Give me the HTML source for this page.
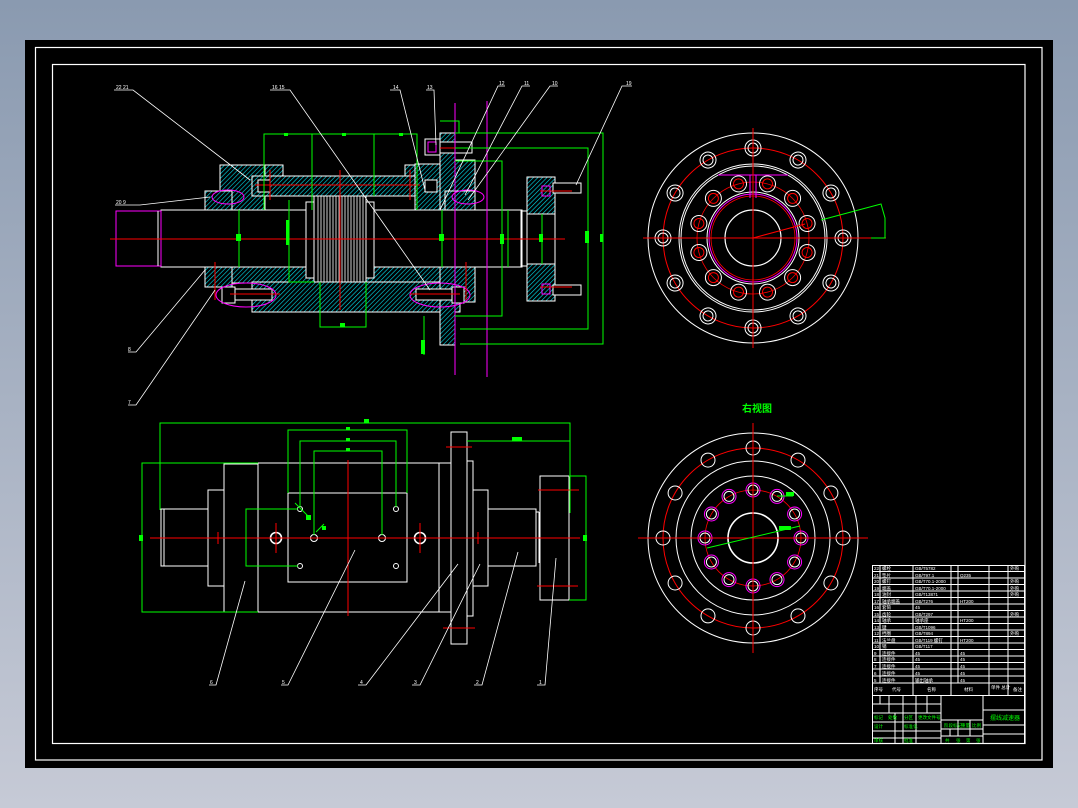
<!DOCTYPE html>
<html><head><meta charset="utf-8"><style>
html,body{margin:0;padding:0}
body{width:1078px;height:808px;overflow:hidden;background:linear-gradient(#8a9ab0,#c6cad6);font-family:"Liberation Sans","Noto Sans CJK SC",sans-serif}
svg{position:absolute;left:0;top:0}
</style></head><body>
<svg width="1078" height="808" viewBox="0 0 1078 808">
<defs>
<pattern id="h" width="3.2" height="3.2" patternUnits="userSpaceOnUse" patternTransform="rotate(45)">
<rect width="3.2" height="3.2" fill="#000"/><line x1="0" y1="0" x2="0" y2="3.2" stroke="#00e0f0" stroke-width="1.2"/></pattern>
</defs>
<rect x="25" y="40" width="1028" height="728" fill="#000"/>
<rect x="35.5" y="47.5" width="1006.5" height="712.5" fill="none" stroke="#fff" stroke-width="1.2"/>
<rect x="52.5" y="64.5" width="972.5" height="679" fill="none" stroke="#fff" stroke-width="1.2"/>

<g id="top">
<g fill="url(#h)" stroke="#fff" stroke-width="1">
<rect x="220" y="165" width="45" height="45"/>
<rect x="252" y="176" width="176" height="20"/>
<rect x="265" y="165" width="18" height="11"/>
<rect x="405" y="165" width="20" height="11"/>
<rect x="415" y="164" width="30" height="46"/>
<rect x="440" y="133" width="15" height="77"/>
<rect x="455" y="160" width="20" height="50"/>
<rect x="205" y="191" width="27" height="19"/>
<rect x="445" y="191" width="30" height="19"/>
<rect x="220" y="267" width="240" height="16"/>
<rect x="252" y="282" width="208" height="30"/>
<rect x="440" y="267" width="15" height="78"/>
<rect x="455" y="267" width="20" height="35"/>
<rect x="205" y="267" width="27" height="20"/>
<rect x="527" y="177" width="28" height="37"/>
<rect x="527" y="264" width="28" height="37"/>
</g>
<rect x="161" y="210" width="361" height="57" fill="#000" stroke="#fff" stroke-width="1"/>
<rect x="116" y="211" width="45" height="55" fill="none" stroke="#f0f" stroke-width="1"/>
<line x1="158" y1="211" x2="158" y2="266" stroke="#fff"/>
<rect x="521" y="211" width="6" height="55" fill="none" stroke="#fff"/>
<rect x="527" y="214" width="28" height="50" fill="#000" stroke="#fff"/>
<rect x="306" y="202" width="68" height="76" fill="#000" stroke="#fff"/>
<rect x="314" y="196" width="52" height="86" fill="#000" stroke="#fff"/>
<g stroke="#fff" stroke-width="0.8">
<line x1="318" y1="196" x2="318" y2="282"/><line x1="321" y1="196" x2="321" y2="282"/><line x1="324" y1="196" x2="324" y2="282"/><line x1="327" y1="196" x2="327" y2="282"/><line x1="330" y1="196" x2="330" y2="282"/><line x1="333" y1="196" x2="333" y2="282"/><line x1="336" y1="196" x2="336" y2="282"/><line x1="339" y1="196" x2="339" y2="282"/><line x1="342" y1="196" x2="342" y2="282"/><line x1="345" y1="196" x2="345" y2="282"/><line x1="348" y1="196" x2="348" y2="282"/><line x1="351" y1="196" x2="351" y2="282"/><line x1="354" y1="196" x2="354" y2="282"/><line x1="357" y1="196" x2="357" y2="282"/><line x1="360" y1="196" x2="360" y2="282"/><line x1="363" y1="196" x2="363" y2="282"/>
</g>
<g fill="#000" stroke="#fff" stroke-width="1">
<rect x="440" y="142" width="32" height="11"/><rect x="425" y="139" width="15" height="16"/>
<rect x="235" y="289" width="37" height="11"/><rect x="222" y="287" width="13" height="16"/>
<rect x="416" y="289" width="36" height="11"/><rect x="452" y="287" width="12" height="16"/>
<rect x="553" y="183" width="28" height="10"/><rect x="553" y="285" width="28" height="10"/>
<rect x="258" y="180" width="12" height="12"/><rect x="425" y="180" width="12" height="12"/>
</g>
<g fill="none" stroke="#f0f" stroke-width="1">
<ellipse cx="228" cy="197" rx="16" ry="7"/><ellipse cx="468" cy="197" rx="16" ry="7"/>
<ellipse cx="246" cy="295" rx="30" ry="12"/><ellipse cx="440" cy="295" rx="30" ry="12"/>
<rect x="542" y="186" width="8" height="10"/><rect x="542" y="284" width="8" height="10"/>
<rect x="428" y="142" width="8" height="10"/>
<line x1="455" y1="103" x2="455" y2="375"/><line x1="487" y1="101" x2="487" y2="377"/>
<line x1="487" y1="161" x2="502" y2="161"/><line x1="487" y1="316" x2="502" y2="316"/>
</g>
<g stroke="#f00" stroke-width="1">
<line x1="110" y1="239" x2="565" y2="239"/>
<line x1="340" y1="170" x2="340" y2="310"/>
<line x1="270" y1="170" x2="270" y2="200"/><line x1="410" y1="170" x2="410" y2="200"/>
<line x1="255" y1="185" x2="420" y2="185"/>
<line x1="215" y1="262" x2="215" y2="300"/><line x1="466" y1="262" x2="466" y2="300"/>
<line x1="440" y1="148" x2="480" y2="148"/>
<line x1="540" y1="191" x2="572" y2="191"/><line x1="540" y1="287" x2="572" y2="287"/>
<line x1="230" y1="294" x2="280" y2="294"/><line x1="410" y1="294" x2="460" y2="294"/>
</g>
<g stroke="#0f0" stroke-width="1" fill="none">
<polyline points="264,210 264,134 417,134 417,210"/>
<line x1="312" y1="134" x2="312" y2="210"/><line x1="374" y1="134" x2="374" y2="196"/>
<polyline points="289,200 289,282 314,282"/>
<polyline points="320,282 320,327 366,327 366,282"/>
<line x1="239" y1="210" x2="239" y2="267"/><line x1="442" y1="210" x2="442" y2="267"/>
<line x1="508" y1="210" x2="508" y2="267"/><line x1="542" y1="214" x2="542" y2="264"/>
<polyline points="455,161 502,161 502,316 455,316"/>
<polyline points="455,148 588,148 588,329 460,329"/>
<polyline points="455,133 603,133 603,344 460,344"/>
<polyline points="440,121 459,121 459,133"/>
<line x1="424" y1="316" x2="424" y2="355"/>
</g>
<g fill="#0f0"><rect x="284" y="133" width="4" height="3"/><rect x="342" y="133" width="4" height="3"/><rect x="399" y="133" width="4" height="3"/>
<rect x="286" y="220" width="3" height="25"/><rect x="236" y="234" width="5" height="7"/><rect x="439" y="234" width="5" height="7"/><rect x="500" y="234" width="4" height="10"/><rect x="539" y="234" width="4" height="8"/><rect x="585" y="231" width="4" height="12"/><rect x="600" y="234" width="3" height="8"/><rect x="340" y="323" width="5" height="4"/><rect x="421" y="340" width="4" height="14"/></g>
<g stroke="#fff" stroke-width="0.8" fill="none">
<polyline points="114,90 126,90 133,90 250,180"/>
<polyline points="270,90 290,90 430,290"/>
<polyline points="390,90 400,90 425,190"/>
<polyline points="426,90 434,90 436,145"/>
<polyline points="505,86 498,86 440,210"/>
<polyline points="530,86 522,86 465,195"/>
<polyline points="558,86 550,86 468,200"/>
<polyline points="632,86 622,86 576,185"/>
<polyline points="115,205 140,205 210,197"/>
<polyline points="128,352 136,352 205,270"/>
<polyline points="128,405 136,405 215,290"/>
</g>
<g fill="#fff" font-size="5"><text x="116" y="89">22 21</text><text x="272" y="89">16 15</text><text x="393" y="89">14</text><text x="427" y="89">13</text><text x="499" y="85">12</text><text x="524" y="85">11</text><text x="552" y="85">10</text><text x="626" y="85">19</text><text x="116" y="204">20 9</text><text x="128" y="351">8</text><text x="128" y="404">7</text></g>
</g>

<g fill="none" stroke="#fff" stroke-width="1">
<rect x="161" y="509" width="47" height="57"/>
<line x1="164" y1="509" x2="164" y2="566"/>
<rect x="208" y="490" width="16" height="96"/>
<rect x="224" y="464" width="34" height="148"/>
<rect x="258" y="463" width="193" height="149"/>
<line x1="439" y1="463" x2="439" y2="612"/>
<rect x="451" y="432" width="16" height="212"/>
<rect x="467" y="461" width="6" height="155"/>
<rect x="473" y="490" width="15" height="96"/>
<rect x="488" y="509" width="48" height="57"/>
<line x1="536" y1="512" x2="539" y2="512"/><line x1="539" y1="512" x2="539" y2="563"/>
<rect x="540" y="476" width="29" height="124"/>
<rect x="288" y="493" width="119" height="89"/>
<circle cx="276" cy="538" r="5.5" stroke-width="1.6"/><circle cx="420" cy="538" r="5.5" stroke-width="1.6"/>
<circle cx="314" cy="538" r="3.5"/><circle cx="382" cy="538" r="3.5"/>
<circle cx="300" cy="509" r="2.5"/><circle cx="396" cy="509" r="2.5"/><circle cx="300" cy="566" r="2.5"/><circle cx="396" cy="566" r="2.5"/>
</g>
<g stroke="#f00" stroke-width="1">
<line x1="150" y1="538" x2="580" y2="538"/>
<line x1="348" y1="460" x2="348" y2="616"/>
<line x1="276" y1="523" x2="276" y2="553"/><line x1="420" y1="523" x2="420" y2="553"/>
<line x1="218" y1="532" x2="218" y2="544"/><line x1="478" y1="532" x2="478" y2="544"/>
<line x1="446" y1="447" x2="472" y2="447"/><line x1="443" y1="628" x2="475" y2="628"/>
<line x1="538" y1="490" x2="579" y2="490"/><line x1="537" y1="586" x2="578" y2="586"/>
</g>
<g stroke="#0f0" stroke-width="1" fill="none">
<polyline points="160,510 160,423 570,423 570,513"/>
<polyline points="288,493 288,430 407,430 407,493"/>
<polyline points="300,507 300,441 396,441 396,507"/>
<polyline points="314,535 314,451 382,451 382,535"/>
<polyline points="467,441 570,441"/>
<polyline points="258,463 142,463 142,612 258,612"/>
<polyline points="298,509 246,509 246,566 298,566"/>
<polyline points="569,476 586,476 586,600 569,600"/>
<line x1="295" y1="503" x2="310" y2="518"/><line x1="316" y1="532" x2="324" y2="524"/>
</g>
<g fill="#0f0"><rect x="364" y="419" width="5" height="4"/><rect x="346" y="427" width="4" height="3"/><rect x="346" y="438" width="4" height="3"/><rect x="346" y="448" width="4" height="3"/><rect x="512" y="437" width="10" height="4"/><rect x="139" y="535" width="4" height="6"/><rect x="583" y="535" width="4" height="6"/><rect x="306" y="515" width="5" height="5"/><rect x="322" y="526" width="4" height="4"/></g>
<g stroke="#fff" stroke-width="0.8" fill="none">
<polyline points="209,685 216,685 245,581"/>
<polyline points="281,685 288,685 355,550"/>
<polyline points="358,685 366,685 458,564"/>
<polyline points="412,685 420,685 480,564"/>
<polyline points="474,685 482,685 518,552"/>
<polyline points="537,685 545,685 556,558"/>
</g>
<g fill="#fff" font-size="5"><text x="210" y="684">6</text><text x="282" y="684">5</text><text x="360" y="684">4</text><text x="414" y="684">3</text><text x="476" y="684">2</text><text x="539" y="684">1</text></g>

<g transform="translate(753,238)">
<circle r="105" fill="none" stroke="#fff" stroke-width="1"/>
<circle r="90" fill="none" stroke="#f00" stroke-width="1"/>
<circle r="74" fill="none" stroke="#fff" stroke-width="1"/>
<circle r="72" fill="none" stroke="#fff" stroke-width="1"/>
<circle r="56" fill="none" stroke="#f00" stroke-width="0.8"/>
<circle r="46" fill="none" stroke="#fff" stroke-width="1"/>
<circle r="44" fill="none" stroke="#f0f" stroke-width="1"/>
<circle r="42" fill="none" stroke="#f00" stroke-width="0.8"/>
<circle r="28" fill="none" stroke="#fff" stroke-width="1.2"/>
<path d="M-35,-63 H35 M-3,-63 V-40 M3,-63 V-40" stroke="#f0f" fill="none"/>
<g fill="none" stroke="#fff">
<g transform="rotate(0) translate(90,0)"><circle r="8"/><circle r="5"/></g>
<g transform="rotate(30) translate(90,0)"><circle r="8"/><circle r="5"/></g>
<g transform="rotate(60) translate(90,0)"><circle r="8"/><circle r="5"/></g>
<g transform="rotate(90) translate(90,0)"><circle r="8"/><circle r="5"/></g>
<g transform="rotate(120) translate(90,0)"><circle r="8"/><circle r="5"/></g>
<g transform="rotate(150) translate(90,0)"><circle r="8"/><circle r="5"/></g>
<g transform="rotate(180) translate(90,0)"><circle r="8"/><circle r="5"/></g>
<g transform="rotate(210) translate(90,0)"><circle r="8"/><circle r="5"/></g>
<g transform="rotate(240) translate(90,0)"><circle r="8"/><circle r="5"/></g>
<g transform="rotate(270) translate(90,0)"><circle r="8"/><circle r="5"/></g>
<g transform="rotate(300) translate(90,0)"><circle r="8"/><circle r="5"/></g>
<g transform="rotate(330) translate(90,0)"><circle r="8"/><circle r="5"/></g>
<g transform="rotate(15) translate(56,0)"><circle r="8"/><circle r="5" stroke="#f00"/></g>
<g transform="rotate(45) translate(56,0)"><circle r="8"/><circle r="5" stroke="#f00"/></g>
<g transform="rotate(75) translate(56,0)"><circle r="8"/><circle r="5" stroke="#f00"/></g>
<g transform="rotate(105) translate(56,0)"><circle r="8"/><circle r="5" stroke="#f00"/></g>
<g transform="rotate(135) translate(56,0)"><circle r="8"/><circle r="5" stroke="#f00"/></g>
<g transform="rotate(165) translate(56,0)"><circle r="8"/><circle r="5" stroke="#f00"/></g>
<g transform="rotate(195) translate(56,0)"><circle r="8"/><circle r="5" stroke="#f00"/></g>
<g transform="rotate(225) translate(56,0)"><circle r="8"/><circle r="5" stroke="#f00"/></g>
<g transform="rotate(255) translate(56,0)"><circle r="8"/><circle r="5" stroke="#f00"/></g>
<g transform="rotate(285) translate(56,0)"><circle r="8"/><circle r="5" stroke="#f00"/></g>
<g transform="rotate(315) translate(56,0)"><circle r="8"/><circle r="5" stroke="#f00"/></g>
<g transform="rotate(345) translate(56,0)"><circle r="8"/><circle r="5" stroke="#f00"/></g>
</g>
<line x1="-110" y1="0" x2="133" y2="0" stroke="#f00"/>
<line x1="0" y1="-110" x2="0" y2="110" stroke="#f00"/>
<line x1="0" y1="0" x2="52" y2="-14" stroke="#f00"/>
<polyline points="68,-18 128,-34 132,-20 132,0 118,0" stroke="#0f0" fill="none"/>
</g>

<text x="742" y="412" fill="#0f0" font-size="10" font-weight="bold" font-family="'Noto Sans CJK SC',sans-serif">右视图</text>
<g transform="translate(753,538)">
<circle r="105" fill="none" stroke="#fff"/>
<circle r="90" fill="none" stroke="#f00"/>
<circle r="77" fill="none" stroke="#fff"/>
<circle r="62" fill="none" stroke="#fff"/>
<circle r="48" fill="none" stroke="#f00" stroke-width="0.8"/>
<circle r="25" fill="none" stroke="#fff" stroke-width="1.6"/>
<g fill="none" stroke="#fff">
<circle cx="90" cy="0" r="7"/><circle cx="77.9" cy="45" r="7"/><circle cx="45" cy="77.9" r="7"/><circle cx="0" cy="90" r="7"/><circle cx="-45" cy="77.9" r="7"/><circle cx="-77.9" cy="45" r="7"/><circle cx="-90" cy="0" r="7"/><circle cx="-77.9" cy="-45" r="7"/><circle cx="-45" cy="-77.9" r="7"/><circle cx="0" cy="-90" r="7"/><circle cx="45" cy="-77.9" r="7"/><circle cx="77.9" cy="-45" r="7"/>
</g>
<g fill="none" stroke="#f0f">
<circle cx="48" cy="0" r="7"/><circle cx="41.6" cy="24" r="7"/><circle cx="24" cy="41.6" r="7"/><circle cx="0" cy="48" r="7"/><circle cx="-24" cy="41.6" r="7"/><circle cx="-41.6" cy="24" r="7"/><circle cx="-48" cy="0" r="7"/><circle cx="-41.6" cy="-24" r="7"/><circle cx="-24" cy="-41.6" r="7"/><circle cx="0" cy="-48" r="7"/><circle cx="24" cy="-41.6" r="7"/><circle cx="41.6" cy="-24" r="7"/>
</g>
<g fill="none" stroke="#fff">
<circle cx="48" cy="0" r="5"/><circle cx="41.6" cy="24" r="5"/><circle cx="24" cy="41.6" r="5"/><circle cx="0" cy="48" r="5"/><circle cx="-24" cy="41.6" r="5"/><circle cx="-41.6" cy="24" r="5"/><circle cx="-48" cy="0" r="5"/><circle cx="-41.6" cy="-24" r="5"/><circle cx="-24" cy="-41.6" r="5"/><circle cx="0" cy="-48" r="5"/><circle cx="24" cy="-41.6" r="5"/><circle cx="41.6" cy="-24" r="5"/>
</g>
<line x1="-115" y1="0" x2="115" y2="0" stroke="#f00"/>
<line x1="0" y1="-115" x2="0" y2="115" stroke="#f00"/>
<line x1="-46" y1="10" x2="47" y2="-12" stroke="#0f0"/>
<line x1="24" y1="-42" x2="40" y2="-42" stroke="#0f0"/>
<rect x="26" y="-12" width="12" height="4" fill="#0f0"/><rect x="33" y="-46" width="8" height="4" fill="#0f0"/>
</g>

<g stroke="#fff" stroke-width="1" fill="none">
<rect x="872.5" y="565.5" width="152" height="178"/>
<line x1="880" y1="565" x2="880" y2="683"/><line x1="913" y1="565" x2="913" y2="695"/><line x1="951" y1="565" x2="951" y2="695"/><line x1="958" y1="565" x2="958" y2="683"/><line x1="989" y1="565" x2="989" y2="695"/><line x1="1008" y1="565" x2="1008" y2="695"/>
<path d="M872,571.5H1025M872,578H1025M872,584.5H1025M872,591H1025M872,597.5H1025M872,604H1025M872,610.5H1025M872,617H1025M872,623.5H1025M872,630H1025M872,636.5H1025M872,643H1025M872,649.5H1025M872,656H1025M872,662.5H1025M872,669H1025M872,676H1025M872,683H1025M872,695.5H1025"/>
<line x1="941" y1="695" x2="941" y2="744"/><line x1="983" y1="695" x2="983" y2="744"/>
<path d="M872,704H941M872,713H941M872,722H941M872,731H941M872,738H941"/>
<path d="M880,695V704M889,695V713M903,695V744M916,695V744M927,695V713M895,713V744"/>
<path d="M941,720H983M941,729H983M941,736H983M958,720V736M970,720V736M950,729V736"/>
<path d="M983,710H1025M983,725H1025M983,734H1025"/>
</g>
<g fill="#fff" font-size="4.5">
<text x="874" y="570">22</text><text x="882" y="570">螺栓</text><text x="915" y="570">GB/T5782</text><text x="1010" y="570">外购</text>
<text x="874" y="577">21</text><text x="882" y="577">垫片</text><text x="915" y="577">GB/T97.1</text><text x="960" y="577">Q235</text>
<text x="874" y="583">20</text><text x="882" y="583">螺钉</text><text x="915" y="583">GB/T70.1-2000</text><text x="1010" y="583">外购</text>
<text x="874" y="590">19</text><text x="882" y="590">端盖</text><text x="915" y="590">GB/T70.1-2000</text><text x="1010" y="590">外购</text>
<text x="874" y="596">18</text><text x="882" y="596">油封</text><text x="915" y="596">GB/T13871</text><text x="1010" y="596">外购</text>
<text x="874" y="603">17</text><text x="882" y="603">轴承端盖</text><text x="915" y="603">GB/T276</text><text x="960" y="603">HT200</text>
<text x="874" y="609">16</text><text x="882" y="609">套筒</text><text x="915" y="609">45</text>
<text x="874" y="616">15</text><text x="882" y="616">齿轮</text><text x="915" y="616">GB/T297</text><text x="1010" y="616">外购</text>
<text x="874" y="622">14</text><text x="882" y="622">轴承</text><text x="915" y="622">轴承座</text><text x="960" y="622">HT200</text>
<text x="874" y="629">13</text><text x="882" y="629">键</text><text x="915" y="629">GB/T1096</text>
<text x="874" y="635">12</text><text x="882" y="635">挡圈</text><text x="915" y="635">GB/T894</text><text x="1010" y="635">外购</text>
<text x="874" y="642">11</text><text x="882" y="642">法兰盘</text><text x="915" y="642">GB/T119 螺钉</text><text x="960" y="642">HT200</text>
<text x="874" y="648">10</text><text x="882" y="648">销</text><text x="915" y="648">GB/T117</text>
<text x="874" y="655">9</text><text x="882" y="655">连接件</text><text x="915" y="655">45</text><text x="960" y="655">45</text>
<text x="874" y="661">8</text><text x="882" y="661">连接件</text><text x="915" y="661">45</text><text x="960" y="661">45</text>
<text x="874" y="668">7</text><text x="882" y="668">连接件</text><text x="915" y="668">45</text><text x="960" y="668">45</text>
<text x="874" y="675">6</text><text x="882" y="675">连接件</text><text x="915" y="675">45</text><text x="960" y="675">45</text>
<text x="874" y="682">5</text><text x="882" y="682">连接件</text><text x="915" y="682">输出轴承</text><text x="960" y="682">45</text>
<text x="874" y="691">序号</text><text x="892" y="691">代号</text><text x="927" y="691">名称</text><text x="964" y="691">材料</text><text x="991" y="689">单件 总计</text><text x="1013" y="691">备注</text>
</g>
<g fill="#0f0" font-size="4.5">
<text x="874" y="719">标记</text><text x="888" y="719">处数</text><text x="904" y="719">分区</text><text x="918" y="719">更改文件号</text>
<text x="874" y="728">设计</text><text x="904" y="728">标准化</text><text x="874" y="742">审核</text><text x="904" y="742">批准</text>
<text x="944" y="727">阶段标记</text><text x="961" y="727">重量</text><text x="972" y="727">比例</text>
<text x="945" y="742">共</text><text x="956" y="742">张</text><text x="966" y="742">第</text><text x="976" y="742">张</text>
<text x="990" y="720" font-size="6">摆线减速器</text>
</g>
</svg>
</body></html>
